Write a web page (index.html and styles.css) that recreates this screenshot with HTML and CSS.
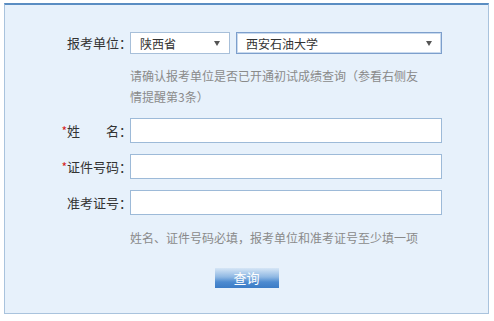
FILE: index.html
```html
<!DOCTYPE html>
<html lang="zh-CN">
<head>
    <meta charset="UTF-8">
    <title>成绩查询</title>
    <link rel="stylesheet" href="styles.css">
</head>
<body>
    <div class="panel">
        <form class="query-form">
            <label class="field-label">报考单位：</label>
            <div class="select-row">
                <div class="select-box select-province">
                    <select>
                        <option>陕西省</option>
                    </select>
                </div>
                <div class="select-box select-school">
                    <select>
                        <option>西安石油大学</option>
                    </select>
                </div>
            </div>

            <div></div>
            <p class="hint">请确认报考单位是否已开通初试成绩查询（参看右侧友情提醒第3条）</p>

            <label class="field-label"><span class="required">*</span>姓　　名：</label>
            <input type="text" class="text-input">

            <label class="field-label"><span class="required">*</span>证件号码：</label>
            <input type="text" class="text-input">

            <label class="field-label">准考证号：</label>
            <input type="text" class="text-input">

            <div></div>
            <p class="hint note">姓名、证件号码必填，报考单位和准考证号至少填一项</p>
        </form>
        <div class="actions">
            <button type="button" class="query-button">查询</button>
        </div>
    </div>
</body>
</html>
```

FILE: styles.css
```css
body {
    margin: 0;
    padding: 0;
    background-color: #fff;
    font-family: "Noto Sans CJK SC", "Liberation Sans", sans-serif;
}

.panel {
    box-sizing: border-box;
    width: 485px;
    margin: 3px 0 0 4px;
    padding: 27px 0 25px;
    background-color: #e7f1fb;
    border: 1px solid #a9c3dd;
    border-top: 2px solid #5a8dc2;
}

.query-form {
    display: grid;
    grid-template-columns: 123px 312px;
    column-gap: 2px;
    row-gap: 11px;
    align-items: center;
}

.field-label {
    text-align: right;
    font-size: 13px;
    color: #333;
    line-height: 20px;
    margin-right: -4px;
}

.required {
    color: #d4201d;
    font-size: 12px;
}

.select-row {
    display: flex;
    gap: 6px;
}

.select-box {
    position: relative;
    height: 22px;
}

.select-box select {
    appearance: none;
    -webkit-appearance: none;
    display: block;
    box-sizing: border-box;
    height: 22px;
    padding: 0 0 0 9px;
    background: #fff;
    border: 1px solid #a7bfd9;
    border-radius: 0;
    font-family: inherit;
    font-size: 12px;
    color: #333;
    outline: none;
}

.select-province select {
    width: 100px;
}

.select-school select {
    width: 206px;
    border-color: #7d9fcc;
    box-shadow: inset 0 0 0 1px #c9daee;
}

.select-box::after {
    content: "";
    position: absolute;
    top: 9px;
    right: 10px;
    border-left: 3px solid transparent;
    border-right: 3px solid transparent;
    border-top: 5px solid #555;
    pointer-events: none;
}

.hint {
    margin: 0;
    max-width: 292px;
    font-size: 12px;
    line-height: 21px;
    color: #8a8a8a;
}

.hint.note {
    max-width: none;
    margin-top: 1px;
}

.text-input {
    box-sizing: border-box;
    width: 312px;
    height: 25px;
    margin: 0;
    padding: 0 6px;
    background: #fff;
    border: 1px solid #9dbad8;
    outline: none;
}

.actions {
    display: flex;
    justify-content: center;
    margin-top: 20px;
}

.query-button {
    display: block;
    width: 64px;
    height: 20px;
    padding: 0;
    border: none;
    border-radius: 0;
    background: linear-gradient(to bottom, #d6e6f6 0%, #8fb8e3 45%, #4d8bd0 70%, #3b7cc6 100%);
    color: #fff;
    font-family: inherit;
    font-size: 13px;
    line-height: 20px;
    cursor: pointer;
}
```
